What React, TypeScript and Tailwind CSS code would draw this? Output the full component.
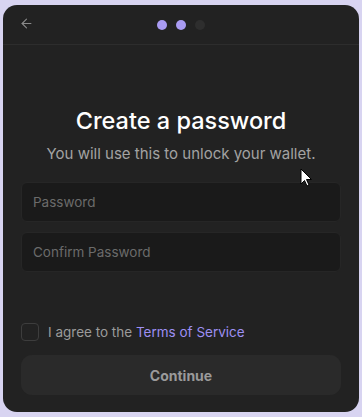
import React from 'react';
import { ArrowLeft } from 'lucide-react';

function App() {
  const [agreed, setAgreed] = React.useState(false);
  const step = 1;

  return (
    <div
      className="w-[362px] h-[417px] bg-[#d8d4f1] pt-[5px] px-[3px] pb-[5px]"
      style={{ fontFamily: 'Inter, "Noto Sans", sans-serif' }}
    >
      <div className="relative h-[407px] bg-[#222222] rounded-[14px] flex flex-col overflow-hidden">
        {/* Header */}
        <header className="relative h-[40px] flex items-center justify-center border-b border-[#2d2d2d]">
          <button className="absolute left-[16px] top-[11px] text-[#8a8a8a]">
            <ArrowLeft className="w-[15px] h-[15px]" strokeWidth={1.75} />
          </button>
          <div className="flex items-center gap-[9px]">
            {[0, 1, 2].map((i) => (
              <span
                key={i}
                className={
                  i <= step
                    ? 'w-[10px] h-[10px] rounded-full bg-[#a99bf2]'
                    : 'w-[10px] h-[10px] rounded-full bg-[#2e2e2e]'
                }
              />
            ))}
          </div>
        </header>

        {/* Main */}
        <div className="flex-1 flex flex-col px-[18px]">
          <h1 className="mt-[62px] text-center text-[23.5px] leading-[28px] font-medium text-white">
            Create a password
          </h1>
          <p className="mt-[9px] text-center text-[15px] leading-[20px] text-[#a3a3a3]">
            You will use this to unlock your wallet.
          </p>

          <div className="mt-[18px] flex flex-col gap-[10px]">
            <input
              type="password"
              placeholder="Password"
              className="h-[40px] w-full rounded-[6px] bg-[#1a1a1a] border border-[#262626] px-[11px] text-[13.5px] text-white placeholder-[#6b6b6b] outline-none"
            />
            <input
              type="password"
              placeholder="Confirm Password"
              className="h-[40px] w-full rounded-[6px] bg-[#1a1a1a] border border-[#262626] px-[11px] text-[13.5px] text-white placeholder-[#6b6b6b] outline-none"
            />
          </div>

          <label className="mt-auto flex items-center gap-[9px] cursor-pointer">
            <input
              type="checkbox"
              checked={agreed}
              onChange={(e) => setAgreed(e.target.checked)}
              className="appearance-none w-[18px] h-[18px] rounded-[4px] border border-[#3d3d3d] bg-[#222222]"
            />
            <span className="text-[13.5px] leading-[20px] text-[#9b9b9b]">
              I agree to the <span className="text-[#9d8ff3]">Terms of Service</span>
            </span>
          </label>

          <button className="mt-[13px] mb-[17px] h-[40px] w-full rounded-[11px] bg-[#2a2a2a] text-[14px] font-bold text-[#9a9a9a]">
            Continue
          </button>
        </div>

        {/* mouse cursor in the capture */}
        <svg
          className="absolute left-[297px] top-[163px]"
          width="14"
          height="20"
          viewBox="0 0 14 20"
        >
          <path d="M1 1 L1 16 L4.5 12.5 L7 18 L9 17 L6.5 11.5 L11.5 11.5 Z" fill="#ffffff" stroke="#000000" strokeWidth="1" />
        </svg>
      </div>
    </div>
  );
}

export default App;
